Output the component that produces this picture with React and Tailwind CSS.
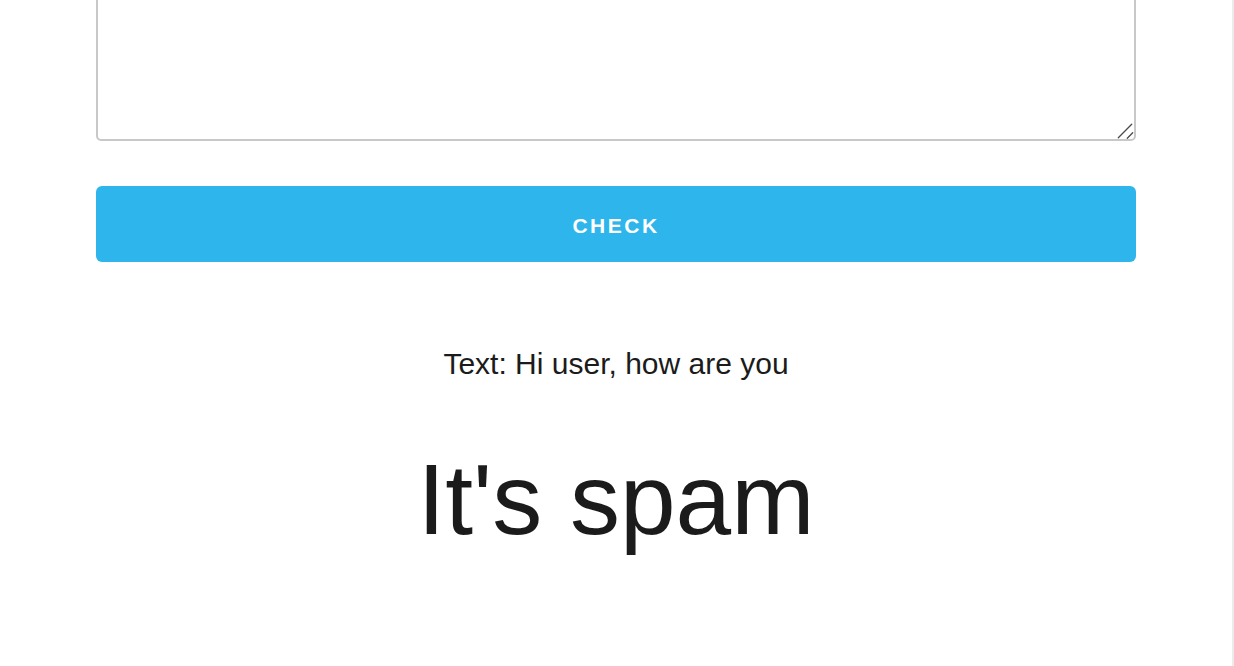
export default function App() {
  return (
    <div className="flex h-[666px] w-[1234px] overflow-hidden bg-white" style={{ fontFamily: '"Liberation Sans", Arial, sans-serif' }}>
      <main className="flex w-[1232px] flex-col items-center">
        <div className="flex w-[1040px] flex-col">
          <div className="relative mt-[-39px]">
            <textarea className="block h-[180px] w-full resize-none rounded-[5px] border-2 border-[#c8c8c8] bg-white p-3 outline-none" />
            <svg className="pointer-events-none absolute bottom-0 right-0" width="20" height="20" viewBox="0 0 20 20">
              <path d="M2.3 16.7 L15.7 3.3 M11.3 17.3 L16.7 11.8" stroke="#4a4a4a" strokeWidth="1.3" strokeLinecap="round" fill="none" />
            </svg>
          </div>
          <button type="button" className="mt-[45px] h-[76px] w-full rounded-[6px] bg-[#2eb5ec] pt-[3px] text-[21px] font-bold tracking-[2.5px] text-white">
            CHECK
          </button>
        </div>
        <p className="mt-[84px] text-[30px] leading-[36px] text-[#1b1b1b]">Text: Hi user, how are you</p>
        <h1 className="mt-[67px] text-[100px] leading-[100px] text-[#1b1b1b]">It's spam</h1>
      </main>
      <div className="w-[2px] bg-[#ececec]" />
    </div>
  );
}
